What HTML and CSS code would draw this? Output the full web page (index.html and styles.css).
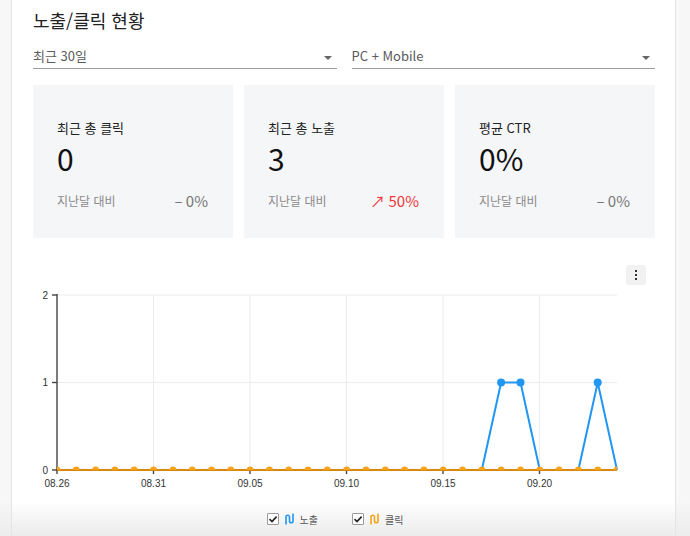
FILE: index.html
```html
<!DOCTYPE html>
<html lang="ko">
<head>
<meta charset="utf-8">
<title>노출/클릭 현황</title>
<link rel="stylesheet" href="styles.css">
</head>
<body>
<div class="page">
  <aside class="side side-left"></aside>
  <main class="main">
    <h1 class="title">노출/클릭 현황</h1>
    <div class="filters">
      <div class="select"><span>최근 30일</span><i class="caret"></i></div>
      <div class="select"><span>PC + Mobile</span><i class="caret"></i></div>
    </div>
    <div class="cards">
      <div class="card">
        <div class="card-label">최근 총 클릭</div>
        <div class="card-value">0</div>
        <div class="card-compare"><span class="cmp-label">지난달 대비</span><span class="cmp-val">– 0%</span></div>
      </div>
      <div class="card">
        <div class="card-label">최근 총 노출</div>
        <div class="card-value">3</div>
        <div class="card-compare"><span class="cmp-label">지난달 대비</span><span class="cmp-val up">↗ 50%</span></div>
      </div>
      <div class="card">
        <div class="card-label">평균 CTR</div>
        <div class="card-value">0%</div>
        <div class="card-compare"><span class="cmp-label">지난달 대비</span><span class="cmp-val">– 0%</span></div>
      </div>
    </div>
    <div class="chart-tools">
      <button class="kebab" type="button"><span></span><span></span><span></span></button>
    </div>
    <svg class="chart" width="622" height="215" viewBox="0 0 622 215">
      <defs>
        <clipPath id="plot"><rect x="24" y="0" width="560" height="185"/></clipPath>
      </defs>
      <g class="grid">
        <line x1="24" y1="10" x2="584" y2="10"/>
        <line x1="24" y1="97.5" x2="584" y2="97.5"/>
        <line x1="120.5" y1="10" x2="120.5" y2="185"/>
        <line x1="217" y1="10" x2="217" y2="185"/>
        <line x1="313.5" y1="10" x2="313.5" y2="185"/>
        <line x1="410" y1="10" x2="410" y2="185"/>
        <line x1="506.5" y1="10" x2="506.5" y2="185"/>
      </g>
      <g class="axis">
        <line x1="24" y1="9" x2="24" y2="186"/>
        <line x1="23" y1="185" x2="584" y2="185"/>
        <line x1="19" y1="10" x2="24" y2="10"/>
        <line x1="19" y1="97.5" x2="24" y2="97.5"/>
        <line x1="19" y1="185" x2="24" y2="185"/>
        <line x1="24" y1="185" x2="24" y2="189"/>
        <line x1="120.5" y1="185" x2="120.5" y2="189"/>
        <line x1="217" y1="185" x2="217" y2="189"/>
        <line x1="313.5" y1="185" x2="313.5" y2="189"/>
        <line x1="410" y1="185" x2="410" y2="189"/>
        <line x1="506.5" y1="185" x2="506.5" y2="189"/>
      </g>
      <g class="ylabels">
        <text x="15" y="13.5">2</text>
        <text x="15" y="101">1</text>
        <text x="15" y="188.5">0</text>
      </g>
      <g class="xlabels">
        <text x="24" y="202">08.26</text>
        <text x="120.5" y="202">08.31</text>
        <text x="217" y="202">09.05</text>
        <text x="313.5" y="202">09.10</text>
        <text x="410" y="202">09.15</text>
        <text x="506.5" y="202">09.20</text>
      </g>
      <polyline class="line-blue" points="24,185 448.8,185 468.1,97.5 487.5,97.5 506.8,185 545.4,185 564.7,97.5 584,185"/>
      <g class="dots-blue">
        <circle cx="468.1" cy="97.5" r="4"/>
        <circle cx="487.5" cy="97.5" r="4"/>
        <circle cx="564.7" cy="97.5" r="4"/>
      </g>
      <line class="line-orange" x1="24" y1="185" x2="584" y2="185"/>
      <g class="dots-orange" clip-path="url(#plot)">
        <circle cx="24" cy="185" r="3.5"/>
        <circle cx="43.3" cy="185" r="3.5"/>
        <circle cx="62.6" cy="185" r="3.5"/>
        <circle cx="81.9" cy="185" r="3.5"/>
        <circle cx="101.2" cy="185" r="3.5"/>
        <circle cx="120.5" cy="185" r="3.5"/>
        <circle cx="139.9" cy="185" r="3.5"/>
        <circle cx="159.2" cy="185" r="3.5"/>
        <circle cx="178.5" cy="185" r="3.5"/>
        <circle cx="197.8" cy="185" r="3.5"/>
        <circle cx="217.1" cy="185" r="3.5"/>
        <circle cx="236.4" cy="185" r="3.5"/>
        <circle cx="255.7" cy="185" r="3.5"/>
        <circle cx="275" cy="185" r="3.5"/>
        <circle cx="294.3" cy="185" r="3.5"/>
        <circle cx="313.7" cy="185" r="3.5"/>
        <circle cx="333" cy="185" r="3.5"/>
        <circle cx="352.3" cy="185" r="3.5"/>
        <circle cx="371.6" cy="185" r="3.5"/>
        <circle cx="390.9" cy="185" r="3.5"/>
        <circle cx="410.2" cy="185" r="3.5"/>
        <circle cx="429.5" cy="185" r="3.5"/>
        <circle cx="448.8" cy="185" r="3.5"/>
        <circle cx="468.1" cy="185" r="3.5"/>
        <circle cx="487.5" cy="185" r="3.5"/>
        <circle cx="506.8" cy="185" r="3.5"/>
        <circle cx="526.1" cy="185" r="3.5"/>
        <circle cx="545.4" cy="185" r="3.5"/>
        <circle cx="564.7" cy="185" r="3.5"/>
        <circle cx="584" cy="185" r="3.5"/>
      </g>
    </svg>
    <div class="legend">
      <label class="legend-item">
        <span class="check"><svg width="10" height="10" viewBox="0 0 10 10"><path d="M1.5 5.2 L4 7.6 L8.6 2.6" fill="none" stroke="#222" stroke-width="1.6"/></svg></span>
        <svg class="squiggle" width="9" height="12" viewBox="0 0 9 12"><path d="M1 11.5 V4 A1.75 1.75 0 0 1 4.5 4 V8 A1.75 1.75 0 0 0 8 8 V0.5" fill="none" stroke="#2196f3" stroke-width="1.6"/></svg>
        <span class="legend-text">노출</span>
      </label>
      <label class="legend-item">
        <span class="check"><svg width="10" height="10" viewBox="0 0 10 10"><path d="M1.5 5.2 L4 7.6 L8.6 2.6" fill="none" stroke="#222" stroke-width="1.6"/></svg></span>
        <svg class="squiggle" width="9" height="12" viewBox="0 0 9 12"><path d="M1 11.5 V4 A1.75 1.75 0 0 1 4.5 4 V8 A1.75 1.75 0 0 0 8 8 V0.5" fill="none" stroke="#f7a21b" stroke-width="1.6"/></svg>
        <span class="legend-text">클릭</span>
      </label>
    </div>
  </main>
  <aside class="side side-right"></aside>
</div>
</body>
</html>
```

FILE: styles.css
```css
* { box-sizing: border-box; }
html, body { margin: 0; padding: 0; }
body {
  font-family: "Noto Sans CJK KR", "Noto Sans", sans-serif;
  color: #222;
  background: #fff;
}
.page {
  display: flex;
  height: 536px;
  overflow: hidden;
}
.side {
  background: linear-gradient(to bottom, #f7f7f7 0, #f7f7f7 500px, #ececec 536px);
}
.side-left {
  width: 12px;
  border-right: 1px solid #e4e4e4;
}
.side-right {
  width: 15px;
  border-left: 1px solid #e4e4e4;
}
.main {
  flex: 1;
  padding: 0 20px 0 21px;
  background: linear-gradient(to bottom, #fff 0, #fff 502px, #ebebeb 536px);
}
.title {
  margin: 7px 0 0;
  font-size: 18px;
  line-height: 26px;
  font-weight: 400;
  color: #222;
}
.filters {
  display: grid;
  grid-template-columns: 1fr 1fr;
  column-gap: 15px;
  margin-top: 12px;
}
.select {
  display: flex;
  align-items: center;
  justify-content: space-between;
  height: 24px;
  padding: 0 5px 2px 0;
  border-bottom: 1px solid #9e9e9e;
  font-size: 13px;
  color: #5a5a5a;
}
.select span { line-height: 20px; }
.caret {
  width: 0;
  height: 0;
  border-left: 4px solid transparent;
  border-right: 4px solid transparent;
  border-top: 4px solid #666;
  margin-top: 5px;
}
.cards {
  display: grid;
  grid-template-columns: repeat(3, 1fr);
  column-gap: 11px;
  margin-top: 16px;
}
.card {
  height: 153px;
  background: #f5f6f8;
  padding: 34px 25px 0 24px;
  display: flex;
  flex-direction: column;
}
.card-label {
  font-size: 13px;
  line-height: 18px;
  color: #222;
}
.card-value {
  font-size: 30px;
  line-height: 36px;
  margin-top: 3px;
  color: #111;
}
.card-compare {
  display: flex;
  justify-content: space-between;
  align-items: center;
  margin-top: 14px;
  height: 20px;
}
.cmp-label {
  font-size: 12px;
  color: #8a8a8a;
}
.cmp-val {
  font-size: 15px;
  color: #777;
}
.cmp-val.up { color: #f2363c; }
.chart-tools {
  display: flex;
  justify-content: flex-end;
  margin-top: 27px;
  padding-right: 9px;
}
.kebab {
  width: 20px;
  height: 20px;
  border: 0;
  border-radius: 3px;
  background: #f1f1f1;
  padding: 0;
  display: flex;
  flex-direction: column;
  align-items: center;
  justify-content: center;
  gap: 2px;
}
.kebab span {
  width: 2px;
  height: 2px;
  background: #333;
}
.chart {
  display: block;
  font-family: "Liberation Sans", Arial, sans-serif;
}
.grid line { stroke: #ececec; stroke-width: 1; }
.axis line { stroke: #444; stroke-width: 1.4; }
.ylabels text { font-size: 10px; fill: #333; text-anchor: end; }
.xlabels text { font-size: 10px; fill: #333; text-anchor: middle; }
.line-blue { fill: none; stroke: #2196f3; stroke-width: 2; stroke-linejoin: round; }
.dots-blue circle { fill: #2196f3; }
.line-orange { stroke: #d9870f; stroke-width: 2; }
.dots-orange circle { fill: #f7a21b; }
.legend {
  display: flex;
  justify-content: center;
  gap: 34px;
  margin-top: 12px;
  padding-right: 18px;
}
.legend-item {
  display: flex;
  align-items: center;
  height: 14px;
}
.check {
  width: 12px;
  height: 12px;
  border: 1px solid #9a9a9a;
  border-radius: 1px;
  background: #fff;
  display: flex;
  align-items: center;
  justify-content: center;
}
.squiggle { margin-left: 6px; }
.legend-text {
  margin-left: 6px;
  font-size: 10px;
  color: #555;
}
```
